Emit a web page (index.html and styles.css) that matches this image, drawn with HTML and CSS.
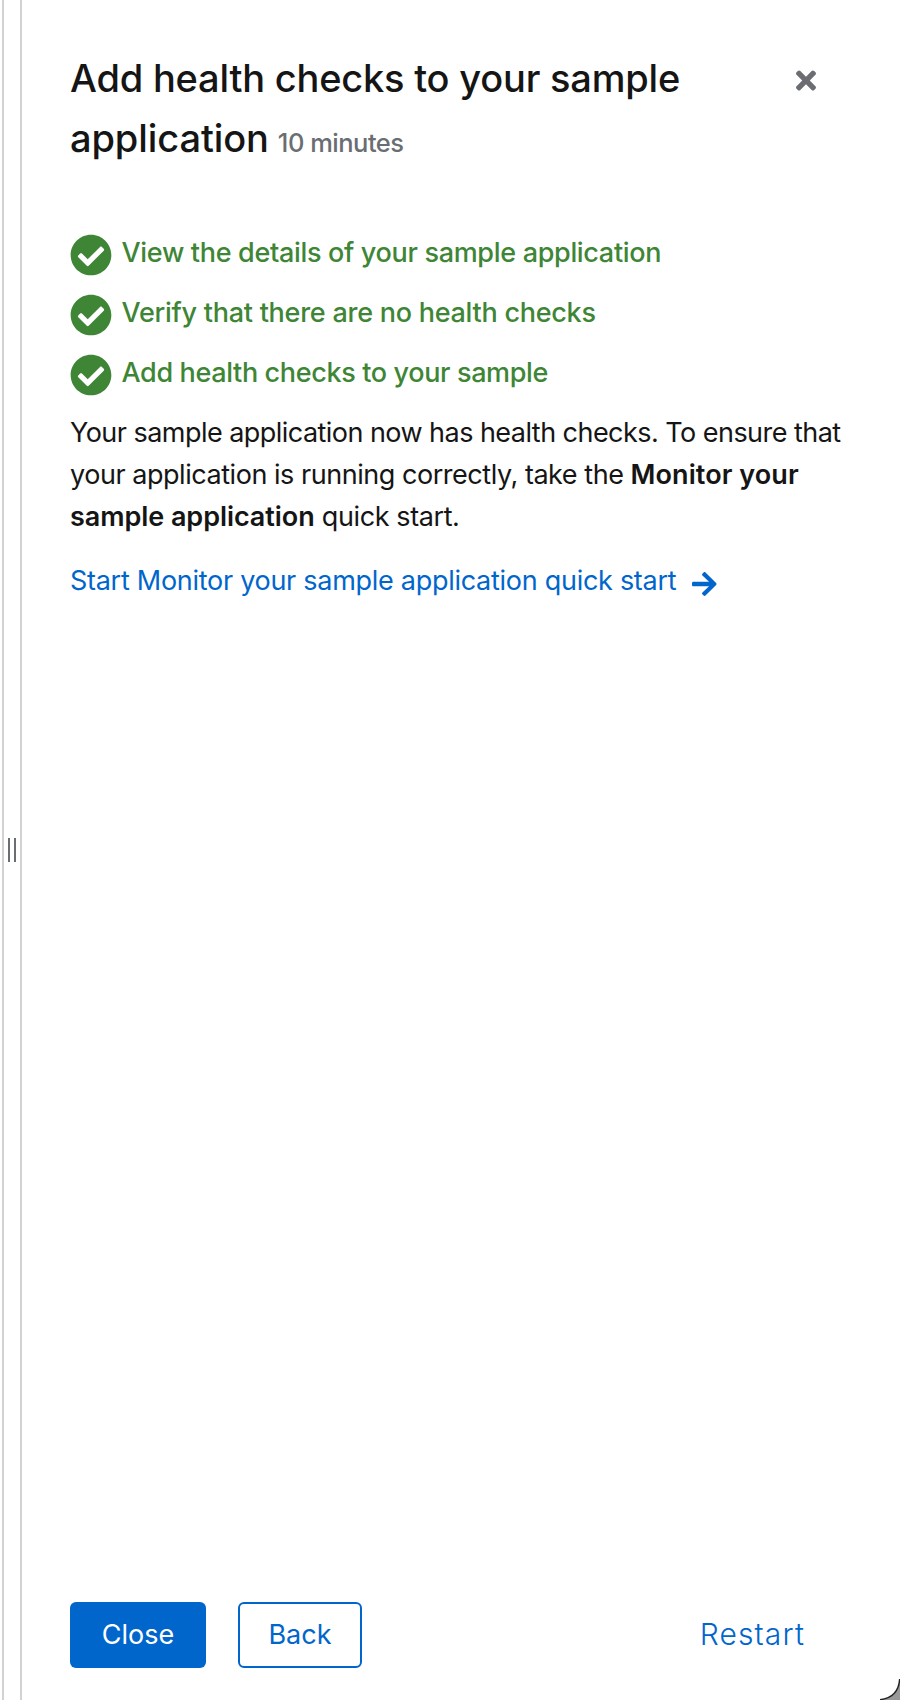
FILE: index.html
```
<!DOCTYPE html>
<html lang="en">
<head>
<meta charset="utf-8">
<title>Quick start</title>
<link rel="stylesheet" href="styles.css">
</head>
<body>
<div class="window">
  <div class="splitter"><span class="grip"></span></div>
  <main class="panel">
    <header class="header">
      <h1 class="title"><span class="title-a">Add health checks to your sample</span><br><span class="title-b">application</span><span class="duration">10 minutes</span></h1>
      <button class="dismiss" aria-label="Close panel">
        <svg viewBox="0 0 352 512" width="20" height="29"><path fill="currentColor" d="M242.72 256l100.07-100.07c12.28-12.28 12.28-32.19 0-44.48l-22.24-22.24c-12.28-12.28-32.19-12.28-44.48 0L176 189.28 75.93 89.21c-12.28-12.28-32.19-12.28-44.48 0L9.21 111.45c-12.28 12.28-12.28 32.19 0 44.48L109.28 256 9.21 356.07c-12.28 12.28-12.28 32.19 0 44.48l22.24 22.24c12.28 12.28 32.2 12.28 44.48 0L176 322.72l100.07 100.07c12.28 12.28 32.2 12.28 44.48 0l22.24-22.24c12.28-12.28 12.28-32.19 0-44.48L242.72 256z"/></svg>
      </button>
    </header>
    <ul class="tasks">
      <li class="task"><svg class="check" viewBox="0 0 512 512"><use href="#check"/></svg><span class="task-a">View the details of your sample application</span></li>
      <li class="task"><svg class="check" viewBox="0 0 512 512"><use href="#check"/></svg><span class="task-b">Verify that there are no health checks</span></li>
      <li class="task"><svg class="check" viewBox="0 0 512 512"><use href="#check"/></svg><span class="task-c">Add health checks to your sample</span></li>
    </ul>
    <p class="summary"><span class="sum-a">Your sample application now has health checks. To ensure that</span><br><span class="sum-b">your application is running correctly, take the </span><b class="sum-c">Monitor your</b><br><b class="sum-d">sample application</b><span class="sum-e"> quick start.</span></p>
    <a class="next"><span class="next-text">Start Monitor your sample application quick start</span><svg class="arrow" viewBox="0 0 448 512"><path fill="currentColor" d="M190.500 66.900l22.200-22.200c9.400-9.400 24.600-9.400 33.900 0L441 239c9.400 9.400 9.400 24.600 0 33.900L246.600 467.300c-9.400 9.400-24.600 9.400-33.900 0l-22.200-22.200c-9.500-9.500-9.300-25 .4-34.300L311.400 296H24c-13.300 0-24-10.700-24-24v-32c0-13.300 10.700-24 24-24h287.400L190.900 101.200c-9.800-9.300-10-24.800-.4-34.300z"/></svg></a>
    <footer class="footer">
      <button class="btn primary"><span class="close-text">Close</span></button>
      <button class="btn secondary"><span class="back-text">Back</span></button>
      <button class="restart">Restart</button>
    </footer>
  </main>
  <svg class="corner" viewBox="0 0 22 22"><path class="corner-fill" d="M22 2V22H2Q20 20 22 2Z"/><path class="corner-line" d="M21.700 1Q20.500 19.500 2 21.700"/></svg>
</div>
<svg class="defs" width="0" height="0"><defs><path id="check" fill="currentColor" d="M504 256c0 136.967-111.033 248-248 248S8 392.967 8 256 119.033 8 256 8s248 111.033 248 248zM227.314 387.314l184-184c6.248-6.248 6.248-16.379 0-22.627l-22.627-22.627c-6.248-6.249-16.379-6.249-22.628 0L216 308.118l-70.059-70.059c-6.248-6.248-16.379-6.248-22.628 0l-22.627 22.627c-6.248 6.248-6.248 16.379 0 22.627l104 104c6.249 6.249 16.379 6.249 22.628.001z"/></defs></svg>
</body>
</html>
```
FILE: styles.css
```
* { box-sizing: border-box; }
body { margin: 0; background: #fff; color: #151515; font-family: Inter, "Open Sans", sans-serif; overflow: hidden; }
button { font: inherit; background: none; border: 0; padding: 0; }
.window { position: relative; display: flex; width: 900px; height: 1700px; padding-left: 2px; overflow: hidden; }
.splitter { width: 20px; flex: none; display: flex; align-items: center; padding-left: 4px; border-left: 2px solid #d2d2d2; border-right: 2px solid #d2d2d2; }
.grip { width: 8px; height: 24px; border-left: 2px solid #6a6e73; border-right: 2px solid #6a6e73; }
.panel { flex: 1; display: flex; flex-direction: column; padding: 48px 0 32px 48px; white-space: nowrap; }
.header { display: flex; justify-content: space-between; padding-right: 84px; height: 120px; }
.title { margin: 0; font-size: 38px; line-height: 60px; font-weight: 500; }
.title-a { letter-spacing: -0.2px; }
.title-b { letter-spacing: -0.1px; }
.duration { margin-left: 9px; font-size: 25.500px; color: #6a6e73; letter-spacing: -0.5px; }
.dismiss { align-self: flex-start; width: 20px; height: 29px; margin-top: 17.500px; color: #6a6e73; line-height: 0; }
.tasks { list-style: none; margin: 55px 0 0; padding: 0; }
.task { display: flex; gap: 9.500px; height: 60px; font-size: 27px; line-height: 60px; font-weight: 500; color: #3e8635; }
.task-a { letter-spacing: -0.32px; }
.task-b { letter-spacing: -0.26px; }
.task-c { letter-spacing: -0.36px; }
.check { width: 42px; height: 42px; margin-top: 11px; }
.summary { margin: 9px 0 0; font-size: 27px; line-height: 42px; }
.summary b { font-weight: 600; }
.sum-a { letter-spacing: -0.54px; }
.sum-b { letter-spacing: -0.46px; }
.sum-c { letter-spacing: 0.08px; }
.sum-d { letter-spacing: -0.06px; }
.sum-e { letter-spacing: -0.4px; }
.next { display: flex; gap: 16px; margin-top: 22px; font-size: 27px; line-height: 42px; color: #06c; }
.next-text { letter-spacing: -0.28px; }
.arrow { width: 24.500px; height: 28px; margin-top: 10px; }
.footer { display: flex; align-items: center; margin-top: auto; height: 66px; font-size: 27px; }
.btn { height: 66px; padding-bottom: 2px; border-radius: 6px; display: flex; align-items: center; justify-content: center; }
.primary { width: 136px; background: #06c; color: #fff; }
.secondary { width: 124px; margin-left: 32px; border: 2px solid #06c; color: #06c; }
.restart { margin-left: auto; margin-right: 95px; padding-bottom: 3px; font-size: 30px; font-weight: 300; letter-spacing: 1.150px; color: #06c; }
.corner { position: absolute; right: 0; bottom: 0; width: 22px; height: 22px; }
.corner-fill { fill: #999; }
.corner-line { fill: none; stroke: #222; stroke-width: 1.500; }
.defs { position: absolute; }
```
